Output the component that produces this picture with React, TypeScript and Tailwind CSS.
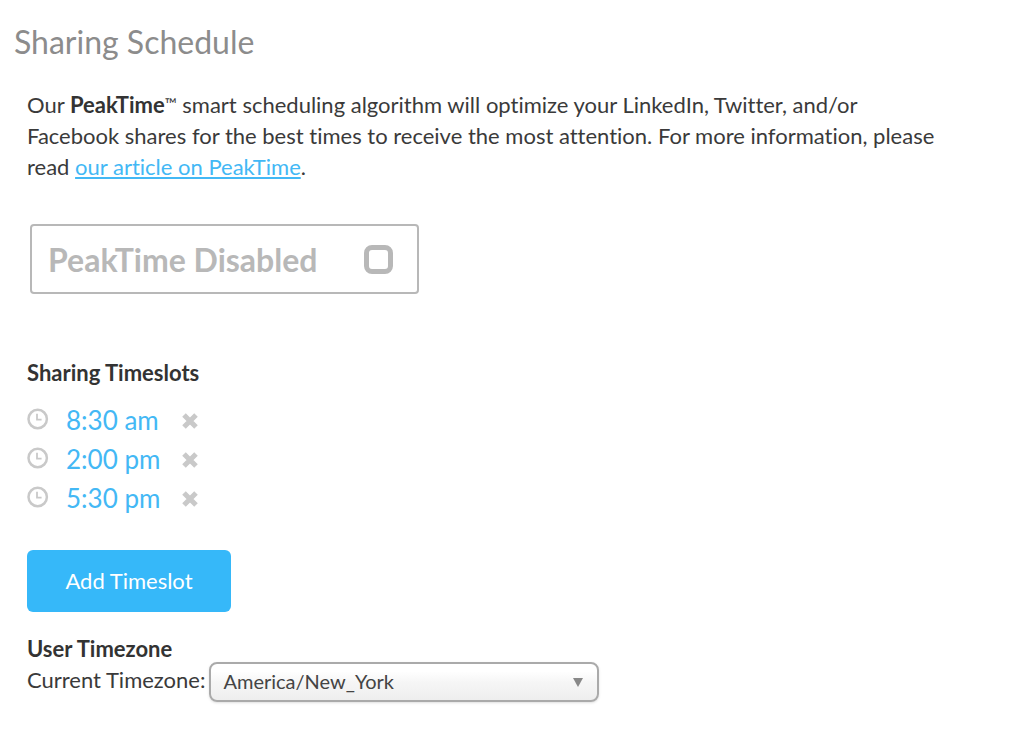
import { useState } from "react";

function ClockIcon() {
  return (
    <svg viewBox="0 0 22 22" className="mb-[3px] size-[22px] shrink-0" fill="none" stroke="#c9c9c9" aria-hidden="true">
      <circle cx="10.7" cy="11" r="9.2" strokeWidth="2.5" />
      <path d="M10 5.8v5.8h4.6" strokeWidth="1.8" />
    </svg>
  );
}

function RemoveIcon() {
  return (
    <svg viewBox="0 0 16 16" className="size-4" fill="none" stroke="#c9c9c9" strokeWidth="5" aria-hidden="true">
      <path d="M2 2l12 12M14 2L2 14" />
    </svg>
  );
}

export default function App() {
  const [slots, setSlots] = useState(["8:30 am", "2:00 pm", "5:30 pm"]);
  const [enabled, setEnabled] = useState(false);

  return (
    <main className="min-h-screen bg-white px-[14px] pt-[23px] pb-10 font-['Lato',sans-serif] text-[22px] leading-[31px] text-[#3a3a3a] [font-variant-ligatures:none]">
      <h1 className="text-[32px] leading-[38px] text-[#8c8c8c]">Sharing Schedule</h1>

      <div className="px-[13px] pt-7">
        <p className="max-w-[912px]">
          Our <strong className="text-[#333333]">PeakTime</strong>
          <span className="align-[3px] text-[16px] leading-none">™</span> smart scheduling algorithm will optimize your
          LinkedIn, Twitter, and/or Facebook shares for the best times to receive the most attention. For more
          information, please read{" "}
          <a href="#peaktime" className="text-[#43b8f5] underline decoration-2 underline-offset-2">
            our article on PeakTime
          </a>
          .
        </p>

        <label className="mt-[42px] ml-[3px] flex h-[70px] w-[389px] max-w-full items-center justify-between rounded border-2 border-[#b8b8b8] pr-6 pl-4 text-[32px] font-bold text-[#b8b8b8]">
          PeakTime {enabled ? "Enabled" : "Disabled"}
          <input
            type="checkbox"
            checked={enabled}
            onChange={(e) => setEnabled(e.target.checked)}
            className="size-[29px] appearance-none rounded-lg border-5 border-[#b8b8b8] checked:bg-[#b8b8b8]"
          />
        </label>

        <h2 className="mt-[63px] font-bold text-[#333333]">Sharing Timeslots</h2>
        <ul className="mt-[13px]">
          {slots.map((slot) => (
            <li key={slot} className="flex h-[39px] items-center">
              <ClockIcon />
              <a href="#edit" className="ml-[17px] w-[116px] text-[26px] text-[#43b8f5]">
                {slot}
              </a>
              <button
                type="button"
                aria-label={`Remove ${slot}`}
                onClick={() => setSlots(slots.filter((s) => s !== slot))}
              >
                <RemoveIcon />
              </button>
            </li>
          ))}
        </ul>

        <button type="button" className="mt-8 h-[62px] w-[204px] rounded-md bg-[#36b8f9] pb-[2px] text-white">
          Add Timeslot
        </button>

        <h2 className="mt-[21px] font-bold text-[#333333]">User Timezone</h2>
        <div className="flex flex-wrap items-start gap-x-1">
          <label htmlFor="timezone">Current Timezone:</label>
          <div className="relative -mt-[2px] w-[390px]">
            <select
              id="timezone"
              className="h-10 w-full appearance-none rounded-lg border-2 border-[#aaaaaa] bg-linear-to-b from-white from-20% via-[#f6f6f6] via-50% to-[#eeeeee] pr-10 pb-[2px] pl-3 text-[20px] text-[#444444] shadow-sm"
            >
              <option>America/New_York</option>
            </select>
            <svg
              viewBox="0 0 10 9"
              className="pointer-events-none absolute top-4 right-4 h-[9px] w-[10px]"
              fill="#888888"
              aria-hidden="true"
            >
              <path d="M0 0h10L5 9z" />
            </svg>
          </div>
        </div>
      </div>
    </main>
  );
}
